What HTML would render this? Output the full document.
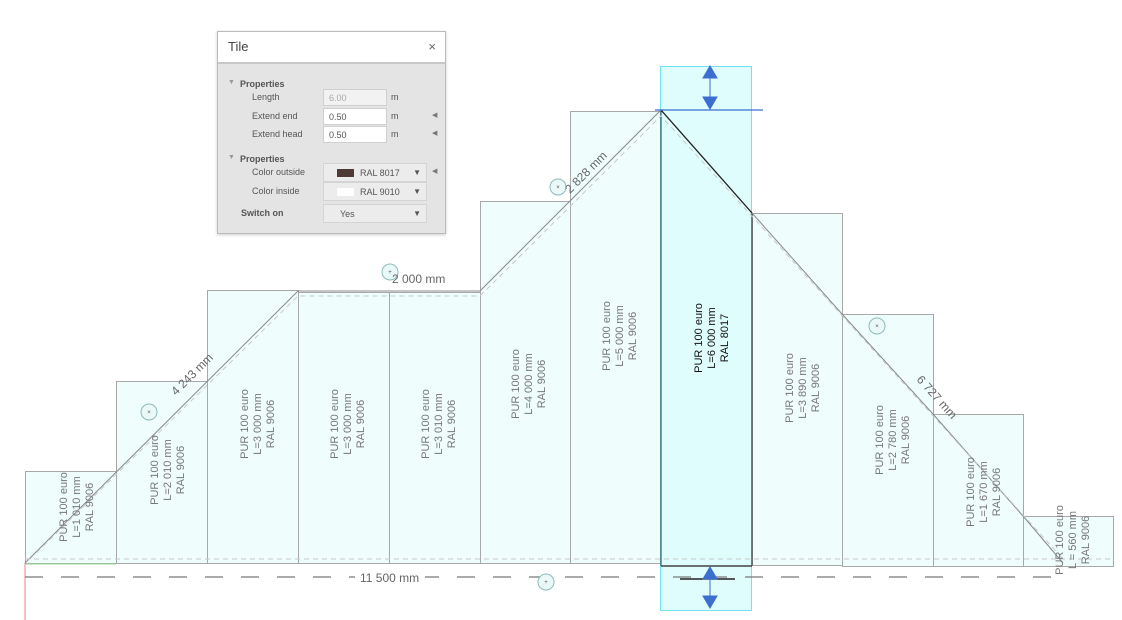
<!DOCTYPE html>
<html><head><meta charset="utf-8"><style>
body{margin:0;width:1122px;height:620px;overflow:hidden;background:#fff;font-family:"Liberation Sans",sans-serif;position:relative}
svg{position:absolute;left:0;top:0}
.dlg{position:absolute;left:217px;top:31px;width:227px;height:201px;background:#e4e4e4;border:1px solid #bbb;box-shadow:0 1px 3px rgba(0,0,0,.2);font-size:9px;color:#555}
.hd{height:30px;background:#fff;border-bottom:2px solid #c8c8c8;position:relative}
.hd span{position:absolute;left:10px;top:7px;font-size:13px;color:#444}
.hd b{position:absolute;right:9px;top:7px;font-weight:normal;font-size:13px;color:#666}
.r{position:absolute;left:0;width:227px;height:18px}
.r .l{position:absolute;top:4px}
.box{position:absolute;left:105px;width:64px;height:17px;background:#fff;border:1px solid #d0d0d0;box-sizing:border-box;padding:3px 5px}
.sel{position:absolute;left:105px;width:104px;height:19px;background:#ececec;border:1px solid #d4d4d4;box-sizing:border-box;padding:4px 0 0 0}
.arr{position:absolute;right:5px;top:4px;font-size:8px;color:#555}
.m{position:absolute;left:173px;top:4px}
.tri{position:absolute;left:214px;top:4px;font-size:7px;color:#777}
</style></head><body>
<svg width="1122" height="620" viewBox="0 0 1122 620" font-family="Liberation Sans, sans-serif">
<g fill="#effdfd" stroke="#a8a8a8" stroke-width="1">
<rect x="25.5" y="471.5" width="91" height="92"/>
<rect x="116.5" y="381.5" width="91" height="182"/>
<rect x="207.5" y="290.5" width="91" height="273"/>
<rect x="298.5" y="292.5" width="91" height="271"/>
<rect x="389.5" y="292.5" width="91" height="271"/>
<rect x="480.5" y="201.5" width="90" height="362"/>
<rect x="570.5" y="111.5" width="91" height="452"/>
<rect x="752.5" y="213.5" width="90" height="352"/>
<rect x="842.5" y="314.5" width="91" height="252"/>
<rect x="933.5" y="414.5" width="90" height="152"/>
<rect x="1023.5" y="516.5" width="90" height="50"/>
</g>
<rect x="660.5" y="66.5" width="91" height="544" fill="#e0fdfd" stroke="#6fe3f0"/>
<line x1="661" y1="111" x2="661" y2="566" stroke="#333"/>
<line x1="752" y1="213" x2="752" y2="566" stroke="#333"/>
<line x1="661" y1="566" x2="752" y2="566" stroke="#444" stroke-width="1.5"/>
<polyline points="25,563 298,291 480,291 661,110 752,213 842,314 933,414 1023,516 1063,563" fill="none" stroke="#888"/>
<line x1="661" y1="110" x2="752" y2="213" stroke="#222" stroke-width="1.3"/>
<polyline points="30,559 298,296 480,296 661,116 1063,559" fill="none" stroke="#c8c8c8" stroke-dasharray="5,4"/>
<line x1="25" y1="559" x2="1110" y2="559" stroke="#c8c8c8" stroke-dasharray="5,4"/>
<line x1="25" y1="564" x2="116" y2="564" stroke="#8fd88f"/>
<line x1="25" y1="563" x2="25" y2="620" stroke="#f08080"/>
<line x1="25" y1="577" x2="1060" y2="577" stroke="#777" stroke-width="1.3" stroke-dasharray="18,18"/>
<line x1="655" y1="110" x2="763" y2="110" stroke="#3a6fd0" stroke-width="1.2"/>
<line x1="680" y1="579" x2="735" y2="579" stroke="#222" stroke-width="1.5"/>
<g fill="#3a6fd0" stroke="#3a6fd0">
<line x1="710" y1="72" x2="710" y2="104"/><polygon points="703,78 717,78 710,66"/><polygon points="703,97 717,97 710,109"/>
<line x1="710" y1="572" x2="710" y2="604"/><polygon points="703,579 717,579 710,567"/><polygon points="703,596 717,596 710,608"/>
</g>
<g fill="#eaf8f8" stroke="#8bbcbc">
<circle cx="149" cy="412" r="8"/><circle cx="390" cy="272" r="8"/><circle cx="558" cy="187" r="8"/><circle cx="877" cy="326" r="8"/><circle cx="546" cy="582" r="8"/>
</g>
<g font-size="6" fill="#555" text-anchor="middle"><text x="149" y="414">×</text><text x="390" y="274">+</text><text x="558" y="189">×</text><text x="877" y="328">×</text><text x="546" y="584">+</text></g>
<g font-size="12" fill="#666">
<text x="392" y="283">2 000 mm</text>
<rect x="355" y="571" width="70" height="12" fill="#fff"/>
<text x="360" y="582">11 500 mm</text>
<text transform="translate(176,396) rotate(-45)">4 243 mm</text>
<text transform="translate(570,194) rotate(-45)">2 828 mm</text>
<text transform="translate(916,380) rotate(48)">6 727 mm</text>
</g>
<g font-size="11" fill="#777" text-anchor="middle">
<text transform="translate(77,507) rotate(-90)"><tspan x="0" y="-10">PUR 100 euro</tspan><tspan x="0" y="3">L=1 010 mm</tspan><tspan x="0" y="16">RAL 9006</tspan></text>
<text transform="translate(168,470) rotate(-90)"><tspan x="0" y="-10">PUR 100 euro</tspan><tspan x="0" y="3">L=2 010 mm</tspan><tspan x="0" y="16">RAL 9006</tspan></text>
<text transform="translate(258,424) rotate(-90)"><tspan x="0" y="-10">PUR 100 euro</tspan><tspan x="0" y="3">L=3 000 mm</tspan><tspan x="0" y="16">RAL 9006</tspan></text>
<text transform="translate(348,424) rotate(-90)"><tspan x="0" y="-10">PUR 100 euro</tspan><tspan x="0" y="3">L=3 000 mm</tspan><tspan x="0" y="16">RAL 9006</tspan></text>
<text transform="translate(439,424) rotate(-90)"><tspan x="0" y="-10">PUR 100 euro</tspan><tspan x="0" y="3">L=3 010 mm</tspan><tspan x="0" y="16">RAL 9006</tspan></text>
<text transform="translate(529,384) rotate(-90)"><tspan x="0" y="-10">PUR 100 euro</tspan><tspan x="0" y="3">L=4 000 mm</tspan><tspan x="0" y="16">RAL 9006</tspan></text>
<text transform="translate(620,336) rotate(-90)"><tspan x="0" y="-10">PUR 100 euro</tspan><tspan x="0" y="3">L=5 000 mm</tspan><tspan x="0" y="16">RAL 9006</tspan></text>
<text transform="translate(803,388) rotate(-90)"><tspan x="0" y="-10">PUR 100 euro</tspan><tspan x="0" y="3">L=3 890 mm</tspan><tspan x="0" y="16">RAL 9006</tspan></text>
<text transform="translate(893,440) rotate(-90)"><tspan x="0" y="-10">PUR 100 euro</tspan><tspan x="0" y="3">L=2 780 mm</tspan><tspan x="0" y="16">RAL 9006</tspan></text>
<text transform="translate(984,492) rotate(-90)"><tspan x="0" y="-10">PUR 100 euro</tspan><tspan x="0" y="3">L=1 670 mm</tspan><tspan x="0" y="16">RAL 9006</tspan></text>
<text transform="translate(1073,540) rotate(-90)"><tspan x="0" y="-10">PUR 100 euro</tspan><tspan x="0" y="3">L = 560 mm</tspan><tspan x="0" y="16">RAL 9006</tspan></text>
<text transform="translate(712,338) rotate(-90)" fill="#111"><tspan x="0" y="-10">PUR 100 euro</tspan><tspan x="0" y="3">L=6 000 mm</tspan><tspan x="0" y="16">RAL 8017</tspan></text>
</g>
</svg>
<div class="dlg">
<div class="hd"><span>Tile</span><b>×</b></div>
<div class="r" style="top:43px"><span class="l" style="left:10px;color:#999;font-size:7px">▼</span><span class="l" style="left:22px;font-weight:bold">Properties</span></div>
<div class="r" style="top:56px"><span class="l" style="left:34px">Length</span><div class="box" style="background:#f2f2f2;color:#aaa;top:1px">6.00</div><span class="m">m</span></div>
<div class="r" style="top:75px"><span class="l" style="left:34px">Extend end</span><div class="box" style="top:1px">0.50</div><span class="m">m</span><span class="tri">◀</span></div>
<div class="r" style="top:93px"><span class="l" style="left:34px">Extend head</span><div class="box" style="top:1px">0.50</div><span class="m">m</span><span class="tri">◀</span></div>
<div class="r" style="top:118px"><span class="l" style="left:10px;color:#999;font-size:7px">▼</span><span class="l" style="left:22px;font-weight:bold">Properties</span></div>
<div class="r" style="top:131px"><span class="l" style="left:34px">Color outside</span><div class="sel" style="top:0"><span style="display:inline-block;width:17px;height:8px;background:#4e3b36;margin:0 6px 0 13px;vertical-align:-1px"></span>RAL 8017<span class="arr">▼</span></div><span class="tri">◀</span></div>
<div class="r" style="top:150px"><span class="l" style="left:34px">Color inside</span><div class="sel" style="top:0"><span style="display:inline-block;width:17px;height:8px;background:#fff;margin:0 6px 0 13px;vertical-align:-1px"></span>RAL 9010<span class="arr">▼</span></div></div>
<div class="r" style="top:172px"><span class="l" style="left:23px;font-weight:bold">Switch on</span><div class="sel" style="top:0;padding-left:16px">Yes<span class="arr">▼</span></div></div>
</div>
</body></html>
